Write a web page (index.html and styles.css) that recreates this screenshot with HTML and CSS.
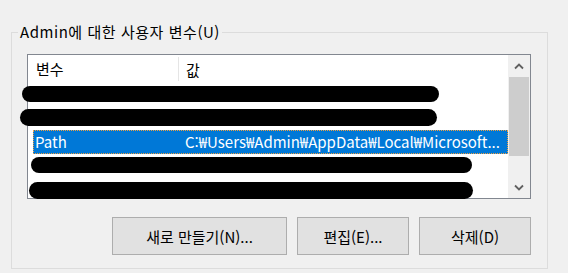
FILE: index.html
```html
<!DOCTYPE html>
<html lang="ko">
<head>
    <meta charset="UTF-8">
    <title>환경 변수</title>
    <link rel="stylesheet" href="styles.css">
</head>
<body>
    <fieldset class="group">
        <legend>Admin에 대한 사용자 변수(U)</legend>
        <div class="list">
            <div class="list-body">
                <div class="list-head">
                    <div class="col-name">변수</div>
                    <div class="col-value">값</div>
                </div>
                <div class="row"></div>
                <div class="row"></div>
                <div class="row selected">
                    <span class="col-name">Path</span>
                    <span class="col-value">C:₩Users₩Admin₩AppData₩Local₩Microsoft...</span>
                </div>
                <div class="row"></div>
                <div class="row"></div>
            </div>
            <div class="scrollbar">
                <div class="arrow">
                    <svg width="10" height="7" viewBox="0 0 10 7"><path d="M1 5.5 L5 1.5 L9 5.5" fill="none" stroke="#606060" stroke-width="1.8"/></svg>
                </div>
                <div class="track"><div class="thumb"></div></div>
                <div class="arrow">
                    <svg width="10" height="7" viewBox="0 0 10 7"><path d="M1 1.5 L5 5.5 L9 1.5" fill="none" stroke="#606060" stroke-width="1.8"/></svg>
                </div>
            </div>
            <!-- redaction marks over the list -->
            <div class="redact r1"></div>
            <div class="redact r2"></div>
            <div class="redact r3"></div>
            <div class="redact r4"></div>
        </div>
        <div class="buttons">
            <button class="btn btn-new">새로 만들기(N)...</button>
            <button class="btn">편집(E)...</button>
            <button class="btn">삭제(D)</button>
        </div>
    </fieldset>
</body>
</html>
```

FILE: styles.css
```css
body {
    margin: 0;
    padding: 0;
    background-color: #f0f0f0;
    font-family: "Noto Sans CJK KR", sans-serif;
    font-size: 15px;
    color: #000;
}
.group {
    box-sizing: border-box;
    width: 537px;
    margin: 22px 0 0 11px;
    padding: 12px 16px 13px 15px;
    border: 1px solid #dcdcdc;
    min-inline-size: 0;
}
.group legend {
    margin-left: -9px;
    padding: 0 2px;
    line-height: 20px;
    height: 20px;
    letter-spacing: 0.55px;
}
.list {
    position: relative;
    box-sizing: border-box;
    width: 504px;
    height: 145px;
    border: 1px solid #828790;
    background-color: #fff;
    display: flex;
}
.list-body {
    flex: 1;
    overflow: hidden;
}
.list-head {
    display: flex;
    height: 28px;
    align-items: center;
}
.list-head .col-name {
    width: 142px;
    padding-left: 8px;
    height: 24px;
    line-height: 24px;
    border-right: 1px solid #e5e5e5;
}
.list-head .col-value {
    padding-left: 7px;
}
.row {
    height: 23.5px;
    display: flex;
    align-items: center;
}
.row.selected {
    box-sizing: border-box;
    margin-left: 5px;
    background-color: #0078d7;
    color: #fff;
    border: 1px dotted #f0a040;
}
.row.selected .col-name {
    width: 150px;
    padding-left: 1px;
}
.row.selected .col-value {
    white-space: nowrap;
    overflow: hidden;
}
.scrollbar {
    width: 22px;
    display: flex;
    flex-direction: column;
    background-color: #f0f0f0;
}
.arrow {
    height: 22px;
    display: flex;
    align-items: center;
    justify-content: center;
}
.track {
    flex: 1;
    padding: 0 1px;
}
.thumb {
    height: 79px;
    background-color: #cdcdcd;
}
.redact {
    position: absolute;
    background-color: #000;
    border-radius: 9px;
}
.r1 { left: -6px; top: 31px; width: 417px; height: 16px; }
.r2 { left: -8px; top: 54px; width: 417px; height: 17px; }
.r3 { left: 3px; top: 102px; width: 441px; height: 16px; }
.r4 { left: 1px; top: 127px; width: 444px; height: 17px; }
.buttons {
    display: flex;
    justify-content: flex-end;
    gap: 10px;
    margin-top: 18px;
}
.btn {
    box-sizing: border-box;
    width: 112px;
    height: 38px;
    background-color: #e1e1e1;
    border: 1px solid #adadad;
    font-family: inherit;
    font-size: 15px;
    color: #000;
    padding: 0;
}
.btn-new {
    width: 175px;
}
```
